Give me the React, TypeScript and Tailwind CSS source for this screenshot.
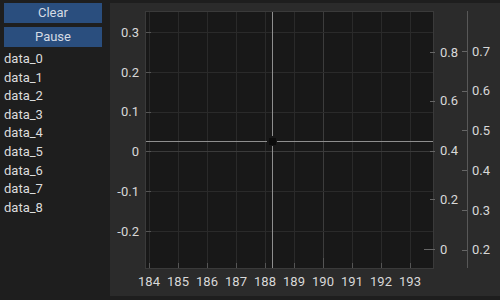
const xTicks = [184, 185, 186, 187, 188, 189, 190, 191, 192, 193];
const leftY = [
  { v: "0.3", y: 32 },
  { v: "0.2", y: 72 },
  { v: "0.1", y: 111.5 },
  { v: "0", y: 151 },
  { v: "-0.1", y: 191 },
  { v: "-0.2", y: 231 },
];
const right1 = [
  { v: "0.8", y: 52 },
  { v: "0.6", y: 100.5 },
  { v: "0.4", y: 150.5 },
  { v: "0.2", y: 199 },
  { v: "0", y: 249 },
];
const right2 = [
  { v: "0.7", y: 51 },
  { v: "0.6", y: 90.5 },
  { v: "0.5", y: 130 },
  { v: "0.4", y: 170 },
  { v: "0.3", y: 210 },
  { v: "0.2", y: 249.5 },
];

function Plot() {
  const px = (i: number) => 149 + 29 * i;
  return (
    <svg className="w-full h-full block" viewBox="110 3 390 293" fontFamily="Roboto, sans-serif" fontSize="13">
      <rect x="145.5" y="11.5" width="288" height="257" fill="#181818" stroke="#3a3a3a" />
      {xTicks.map((t, i) => (
        <line key={t} x1={px(i) + 0.5} x2={px(i) + 0.5} y1="12" y2="268" stroke={t === 190 ? "#3c3c3c" : "#2a2a2a"} />
      ))}
      {leftY.map((t) => (
        <line key={t.v} x1="146" x2="433" y1={Math.round(t.y) + 0.5} y2={Math.round(t.y) + 0.5} stroke={t.v === "0" ? "#3a3a3a" : "#2a2a2a"} />
      ))}
      {leftY.map((t) => (
        <g key={"l" + t.v}>
          <line x1="146" x2="151" y1={Math.round(t.y) + 0.5} y2={Math.round(t.y) + 0.5} stroke="#555" />
          <text x="139" y={t.y} textAnchor="end" dominantBaseline="central" fill="#d8d8d8">{t.v}</text>
        </g>
      ))}
      {xTicks.map((t, i) => (
        <g key={"x" + t}>
          <line x1={px(i) + 0.5} x2={px(i) + 0.5} y1={t === 190 ? 258 : 263} y2="268" stroke="#555" />
          <text x={px(i)} y="281" textAnchor="middle" dominantBaseline="central" fill="#d8d8d8">{t}</text>
        </g>
      ))}
      {right1.map((t) => (
        <g key={"r1" + t.v}>
          <line x1={t.v === "0" ? 424 : 430} x2="435" y1={Math.round(t.y) + 0.5} y2={Math.round(t.y) + 0.5} stroke="#666" />
          <text x="440" y={t.y} dominantBaseline="central" fill="#d8d8d8">{t.v}</text>
        </g>
      ))}
      <line x1="467.5" x2="467.5" y1="11" y2="268" stroke="#585858" />
      {right2.map((t) => (
        <g key={"r2" + t.v}>
          <line x1="462" x2="467" y1={Math.round(t.y) + 0.5} y2={Math.round(t.y) + 0.5} stroke="#666" />
          <text x="472" y={t.y} dominantBaseline="central" fill="#d8d8d8">{t.v}</text>
        </g>
      ))}
      <line x1="272.5" x2="272.5" y1="12" y2="136" stroke="#8e8e8e" />
      <line x1="272.5" x2="272.5" y1="146" y2="268" stroke="#8e8e8e" />
      <line x1="146" x2="267" y1="141.5" y2="141.5" stroke="#8e8e8e" />
      <line x1="277" x2="433" y1="141.5" y2="141.5" stroke="#8e8e8e" />
      <rect x="269" y="138" width="7" height="7" fill="#0c0c0c" />
    </svg>
  );
}

export default function App() {
  const items = Array.from({ length: 9 }, (_, i) => `data_${i}`);
  return (
    <div className="w-[500px] h-[300px] bg-[#1e1e1e] flex font-['Roboto',sans-serif] text-[13px] text-[#dcdcdc] overflow-hidden">
      <div className="w-[110px] shrink-0 pl-1 pt-[3px] flex flex-col">
        <button className="w-[98px] h-5 bg-[#2a4e7e] text-[#d4dbe4] leading-5">Clear</button>
        <button className="w-[98px] h-5 mt-1 bg-[#2a4e7e] text-[#d4dbe4] leading-5">Pause</button>
        <ul className="mt-[3px]">
          {items.map((d) => (
            <li key={d} className="leading-[18.6px] h-[18.6px]">{d}</li>
          ))}
        </ul>
      </div>
      <div className="flex-1 mt-[3px] h-[293px] bg-[#2b2b2b]">
        <Plot />
      </div>
    </div>
  );
}
